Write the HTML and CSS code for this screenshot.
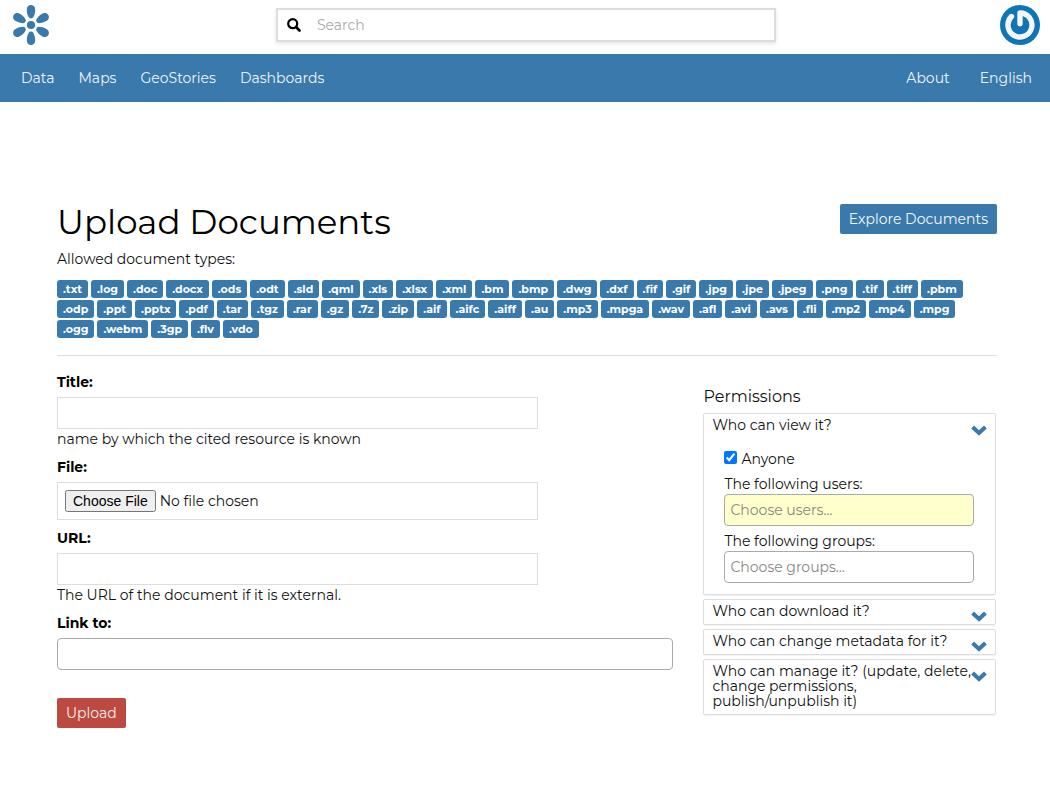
FILE: index.html
```html
<!DOCTYPE html>
<html lang="en">
<head>
<meta charset="utf-8">
<meta name="viewport" content="width=device-width, initial-scale=1">
<title>Upload Documents</title>
<link rel="stylesheet" href="styles.css">
</head>
<body>
<header class="topbar">
  <a class="brand" href="#" aria-label="Home">
    <svg width="38" height="40" viewBox="0 0 38 40" fill="#3a79ab" aria-hidden="true">
      <circle cx="19" cy="20" r="4.1"/>
      <path id="petal" d="M14.800 4.200A4.200 4.200 0 0 1 23.200 4.200C23.200 7.600 22.600 10 21.400 12.100A2.700 2.700 0 0 1 16.600 12.100C15.400 10 14.800 7.600 14.800 4.200Z"/>
      <use href="#petal" transform="rotate(60 19 20)"/>
      <use href="#petal" transform="rotate(120 19 20)"/>
      <use href="#petal" transform="rotate(180 19 20)"/>
      <use href="#petal" transform="rotate(240 19 20)"/>
      <use href="#petal" transform="rotate(300 19 20)"/>
    </svg>
  </a>
  <form class="search" role="search">
    <svg width="14" height="14" viewBox="0 0 14 14" fill="none" stroke="#000" aria-hidden="true">
      <circle cx="5.7" cy="5.7" r="4.5" stroke-width="2.2"/>
      <path d="M9 9l3.5 3.5" stroke-width="2.6" stroke-linecap="round"/>
    </svg>
    <input class="search-input" type="search" placeholder="Search" aria-label="Search">
  </form>
  <a class="avatar" href="#" aria-label="Profile">
    <svg width="40" height="40" viewBox="0 0 40 40" fill="none" aria-hidden="true">
      <circle cx="20" cy="20" r="20" fill="#0c76b8"/>
      <g stroke-width="5.4" stroke-linecap="round" stroke-linejoin="round">
        <path d="M11.500 11.500A12 12 0 1 0 20 8V18.800" stroke="#0a5f97" transform="translate(.3 .6)"/>
        <path d="M11.500 11.500A12 12 0 1 0 20 8V18.800" stroke="#f6f6f6"/>
      </g>
    </svg>
  </a>
</header>
<nav class="nav" aria-label="Main">
  <div class="nav-group">
    <a href="#">Data</a><a href="#">Maps</a><a href="#">GeoStories</a><a href="#">Dashboards</a>
  </div>
  <div class="nav-group nav-right">
    <a href="#">About</a><a href="#">English</a>
  </div>
</nav>
<main class="page">
  <section class="intro">
    <div class="page-head">
      <h1>Upload Documents</h1>
      <a class="btn btn-primary" href="#">Explore Documents</a>
    </div>
    <p class="allowed">Allowed document types:</p>
    <ul class="types">
      <li>.txt</li><li>.log</li><li>.doc</li><li>.docx</li><li>.ods</li><li>.odt</li><li>.sld</li><li>.qml</li><li>.xls</li><li>.xlsx</li><li>.xml</li><li>.bm</li><li>.bmp</li><li>.dwg</li><li>.dxf</li><li>.fif</li><li>.gif</li><li>.jpg</li><li>.jpe</li><li>.jpeg</li><li>.png</li><li>.tif</li><li>.tiff</li><li>.pbm</li><li>.odp</li><li>.ppt</li><li>.pptx</li><li>.pdf</li><li>.tar</li><li>.tgz</li><li>.rar</li><li>.gz</li><li>.7z</li><li>.zip</li><li>.aif</li><li>.aifc</li><li>.aiff</li><li>.au</li><li>.mp3</li><li>.mpga</li><li>.wav</li><li>.afl</li><li>.avi</li><li>.avs</li><li>.fli</li><li>.mp2</li><li>.mp4</li><li>.mpg</li><li>.ogg</li><li>.webm</li><li>.3gp</li><li>.flv</li><li>.vdo</li>
    </ul>
  </section>
  <form class="columns">
    <div class="fields">
      <div class="field">
        <label for="title">Title:</label>
        <input class="control" id="title" type="text">
        <span class="help">name by which the cited resource is known</span>
      </div>
      <div class="field">
        <label for="file">File:</label>
        <input class="control file" id="file" type="file">
      </div>
      <div class="field">
        <label for="url">URL:</label>
        <input class="control" id="url" type="url">
        <span class="help">The URL of the document if it is external.</span>
      </div>
      <div class="field">
        <label for="link">Link to:</label>
        <input class="picker" id="link" type="text">
      </div>
      <button class="btn btn-danger" type="submit">Upload</button>
    </div>
    <aside class="permissions">
      <h2>Permissions</h2>
      <section class="panel">
        <button class="panel-head" type="button">Who can view it?
          <svg class="chevron" width="16" height="11" viewBox="0 0 16 11" aria-hidden="true"><path d="M1.600 2L8 8L14.400 2"/></svg>
        </button>
        <div class="panel-body">
          <label class="check"><input type="checkbox" checked>Anyone</label>
          <label for="users">The following users:</label>
          <input class="picker picker-active" id="users" type="text" placeholder="Choose users...">
          <label class="spaced" for="groups">The following groups:</label>
          <input class="picker" id="groups" type="text" placeholder="Choose groups...">
        </div>
      </section>
      <section class="panel">
        <button class="panel-head" type="button">Who can download it?
          <svg class="chevron" width="16" height="11" viewBox="0 0 16 11" aria-hidden="true"><path d="M1.600 2L8 8L14.400 2"/></svg>
        </button>
      </section>
      <section class="panel">
        <button class="panel-head" type="button">Who can change metadata for it?
          <svg class="chevron" width="16" height="11" viewBox="0 0 16 11" aria-hidden="true"><path d="M1.600 2L8 8L14.400 2"/></svg>
        </button>
      </section>
      <section class="panel">
        <button class="panel-head" type="button">Who can manage it? (update, delete, change permissions, publish/unpublish it)
          <svg class="chevron" width="16" height="11" viewBox="0 0 16 11" aria-hidden="true"><path d="M1.600 2L8 8L14.400 2"/></svg>
        </button>
      </section>
    </aside>
  </form>
</main>
</body>
</html>
```
FILE: styles.css
```css
* { box-sizing: border-box; }
body {
  margin: 0;
  background: #fff;
  color: #111;
  font: 400 14px/20px Montserrat, Inter, "Liberation Sans", sans-serif;
}
input, button { font: inherit; color: inherit; }
h1, h2, p, ul { margin: 0; padding: 0; font-weight: inherit; }
a { color: inherit; text-decoration: none; }

.topbar {
  display: grid;
  grid-template-columns: 1fr minmax(0, 500px) 1fr;
  align-items: center;
  height: 54px;
  padding: 0 10px 4px 12px;
}
.brand, .avatar { display: flex; }
.avatar { justify-self: end; }
.search {
  display: flex;
  align-items: center;
  gap: 16px;
  height: 34px;
  padding-left: 9px;
  border: 2px solid #ddd;
  box-shadow: 0 2px 4px rgba(0, 0, 0, .1);
}
.search-input { flex: 1; min-width: 0; border: 0; padding: 0; outline: 0; background: none; }
.search-input::placeholder { color: #aaa; opacity: 1; }

.nav {
  display: flex;
  justify-content: space-between;
  align-items: center;
  min-height: 48px;
  padding: 0 18px 0 21px;
  background: #3a79ab;
  color: #eef5fa;
}
.nav-group { display: flex; gap: 24px; }
.nav-right { gap: 30px; }

.page { padding: 102px 53px 58px 57px; }
.intro { padding-bottom: 17px; border-bottom: 1px solid #ddd; }
.page-head { display: flex; justify-content: space-between; align-items: flex-start; }
h1 { font-size: 34px; line-height: 36px; color: #000; }
.btn {
  display: inline-block;
  height: 30px;
  padding: 4px 8px;
  border: 1px solid transparent;
  border-radius: 2px;
  color: #f3f8fb;
}
.btn-primary { background: #3a79ab; }
.btn-danger { margin-top: 20px; background: #bc4a40; color: #fbeeed; }
.allowed { margin: 9px 0 11px; }
.types {
  display: flex;
  flex-wrap: wrap;
  gap: 2px 3px;
  padding-right: 20px;
  list-style: none;
}
.types li {
  padding: 0 6px;
  border-radius: 3px;
  background: #3a79ab;
  color: #fff;
  font-size: 11px;
  line-height: 18px;
  font-weight: 700;
}

.columns {
  display: grid;
  grid-template-columns: minmax(0, 21fr) minmax(0, 10fr);
  gap: 30px;
  padding-top: 16px;
}
.field { display: flex; flex-direction: column; margin-bottom: 8px; }
.field label { margin-bottom: 5px; color: #000; font-weight: 700; }
.control {
  width: 78%;
  height: 32px;
  padding: 5px 7px;
  border: 1px solid #ddd;
  background: #fff;
}
.file { height: 38px; padding: 7px; }
.file::file-selector-button {
  font: 14px "Liberation Sans", sans-serif;
  height: 22px;
  margin: 0 4px 0 0;
}
.picker {
  width: 100%;
  height: 32px;
  padding: 5px;
  border: 1px solid #aaa;
  border-radius: 4px;
  background: #fff;
}
.picker::placeholder { color: #888; opacity: 1; }
.picker-active { background: #ffc; }

.permissions { padding-top: 15px; margin-right: 1px; }
h2 { margin-bottom: 6px; font-size: 16px; line-height: 20px; }
.panel {
  margin-bottom: 4px;
  border: 1px solid #ddd;
  border-radius: 2px;
  box-shadow: 0 1px 1px rgba(0, 0, 0, .05);
}
.panel-head {
  position: relative;
  display: block;
  width: 100%;
  padding: 4px 8px 5px;
  border: 0;
  background: none;
  text-align: left;
  line-height: 15px;
}
.chevron { position: absolute; top: 11px; right: 8px; }
.chevron path { fill: none; stroke: #3a79ab; stroke-width: 4; }
.panel-body {
  display: flex;
  flex-direction: column;
  padding: 11px 21px 11px 20px;
}
.check { display: flex; align-items: flex-start; gap: 4px; margin-bottom: 5px; }
.check input { width: 13px; height: 13px; margin: 2px 0 0; }
.spaced { margin-top: 5px; }
```
